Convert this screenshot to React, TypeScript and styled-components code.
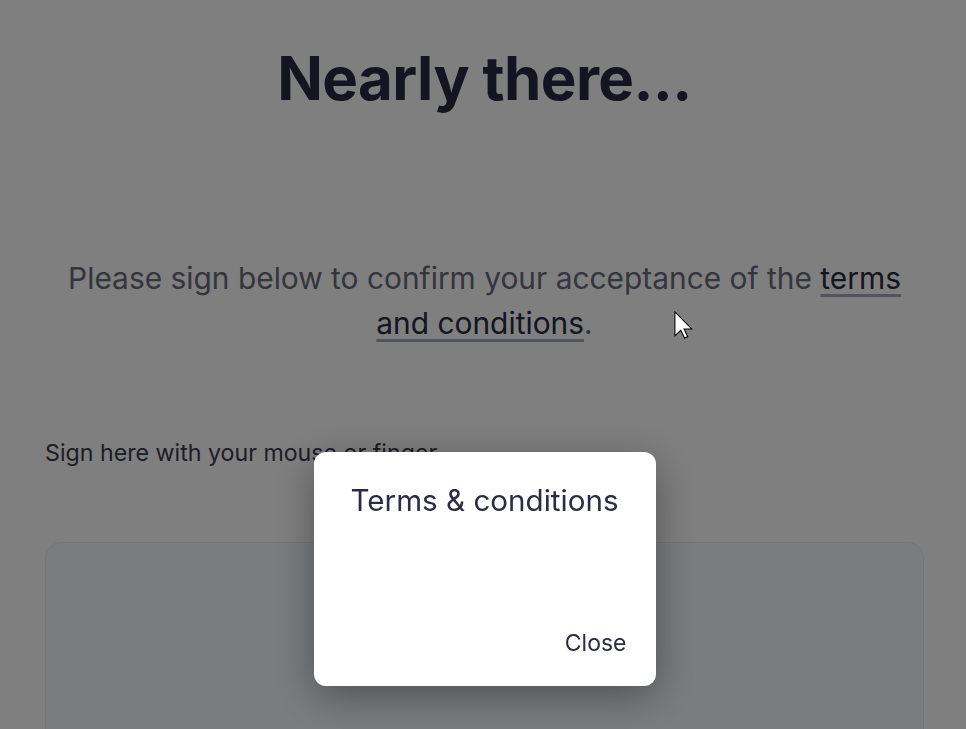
import React from "react";
import styled, { createGlobalStyle } from "styled-components";

const GlobalStyle = createGlobalStyle`
  html, body {
    margin: 0;
    padding: 0;
    background: #ffffff;
    font-family: Inter, "Noto Sans", sans-serif;
    overflow: hidden;
  }
`;

const Page = styled.main`
  height: 729px;
  padding: 0 42px 0 45px;
  box-sizing: border-box;
  overflow: hidden;
`;

const Title = styled.h1`
  margin: 0;
  padding-top: 38px;
  text-align: center;
  font-size: 60px;
  line-height: 80px;
  font-weight: 700;
  color: #2a2a42;
  letter-spacing: -0.6px;
`;

const Intro = styled.p`
  margin: 138px auto 0;
  max-width: 850px;
  text-align: center;
  font-size: 29.9px;
  line-height: 45px;
  color: #6a6a7a;
`;

const TermsLink = styled.a`
  color: #2a2a3e;
  text-decoration: underline;
  text-decoration-color: #a8a8b8;
  text-decoration-thickness: 3px;
  text-underline-offset: 5px;
  cursor: pointer;
`;

const SignLabel = styled.div`
  margin-top: 92px;
  font-size: 23.2px;
  line-height: 30px;
  color: #3a3a4c;
`;

const SignPad = styled.div`
  margin-top: 74px;
  height: 300px;
  border: 1px solid #eaedf2;
  border-radius: 16px;
  background: #f6f8fb;
`;

const Backdrop = styled.div`
  position: fixed;
  inset: 0;
  background: rgba(0, 0, 0, 0.5);
  display: flex;
  justify-content: center;
  align-items: flex-start;
  padding-top: 452px;
  box-sizing: border-box;
`;

const Dialog = styled.div`
  width: 342px;
  height: 234px;
  margin-left: 3px;
  box-sizing: border-box;
  background: #ffffff;
  border-radius: 12px;
  box-shadow: 0 10px 40px rgba(0, 0, 0, 0.35);
  padding: 28px 29px 28px 37px;
  display: flex;
  flex-direction: column;
  justify-content: space-between;
`;

const DialogTitle = styled.h2`
  margin: 0;
  font-size: 29.6px;
  line-height: 40px;
  font-weight: 400;
  color: #2b2b45;
`;

const CloseButton = styled.button`
  align-self: flex-end;
  border: none;
  background: none;
  padding: 0;
  font-family: inherit;
  font-size: 23px;
  line-height: 30px;
  color: #2b2b45;
  cursor: pointer;
`;

const Cursor = styled.svg`
  position: fixed;
  left: 674px;
  top: 311px;
  pointer-events: none;
`;

export default function App() {
  return (
    <>
      <GlobalStyle />
      <Page>
        <Title>Nearly there...</Title>
        <Intro>
          Please sign below to confirm your acceptance of the{" "}
          <TermsLink>terms and conditions</TermsLink>.
        </Intro>
        <SignLabel>Sign here with your mouse or finger</SignLabel>
        <SignPad />
      </Page>
      <Backdrop>
        <Dialog>
          <DialogTitle>Terms &amp; conditions</DialogTitle>
          <CloseButton>Close</CloseButton>
        </Dialog>
      </Backdrop>
      <Cursor width="19" height="28" viewBox="0 0 12.6 18.6">
        <path
          d="M0.6 0.6 L0.6 16.4 L4.5 12.8 L7 18 L9.1 17.1 L6.7 12 L11.9 12 Z"
          fill="#ffffff"
          stroke="#000000"
          strokeWidth="0.7"
          strokeLinejoin="miter"
        />
      </Cursor>
    </>
  );
}
